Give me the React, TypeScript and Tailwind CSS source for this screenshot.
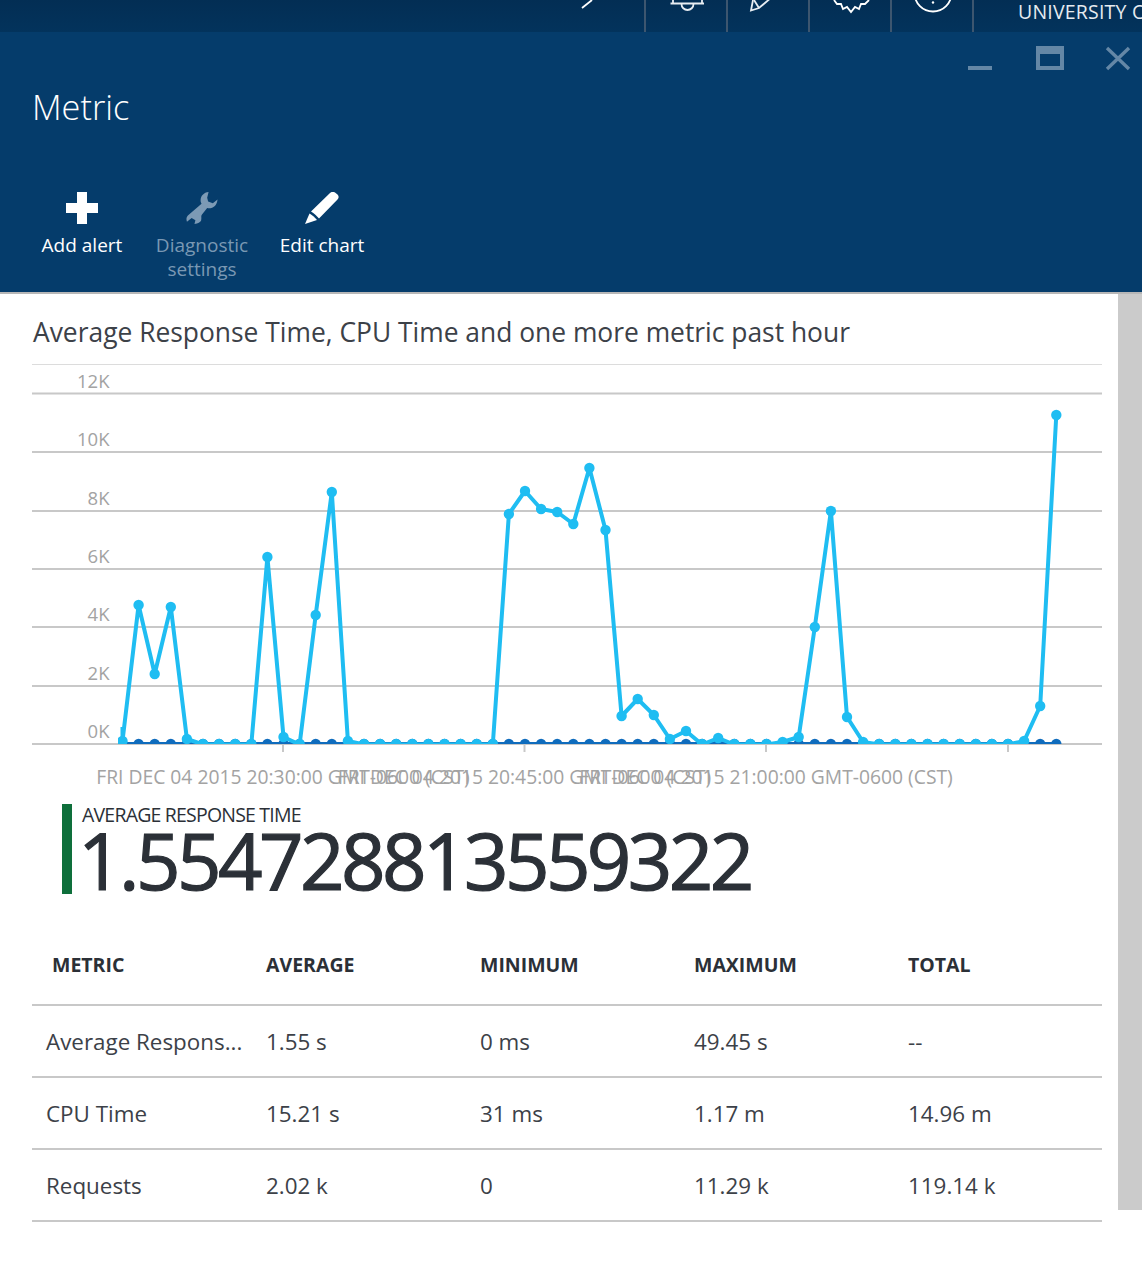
const high: Record<number, number> = {
  0: 741, 1: 605, 2: 674, 3: 607, 4: 739, 9: 557, 10: 737, 12: 615, 13: 492, 14: 741,
  24: 514, 25: 491, 26: 509, 27: 512, 28: 524, 29: 468, 30: 530, 31: 716, 32: 699, 33: 715,
  34: 739, 35: 731, 37: 738, 41: 742, 42: 737, 43: 627, 44: 511, 45: 717, 46: 742, 56: 741, 57: 706, 58: 415,
};
const cyanDots = Array.from({ length: 59 }, (_, k) => ({ x: 122.5 + 16.1 * k, y: high[k] ?? 744.5 }));
const grid = [393.5, 452, 511, 569, 627, 686, 744];
const yLabels: [string, number][] = [["12K", 388], ["10K", 446], ["8K", 505], ["6K", 563], ["4K", 621], ["2K", 680], ["0K", 738]];
const xLabels: [string, number][] = [
  ["FRI DEC 04 2015 20:30:00 GMT-0600 (CST)", 283],
  ["FRI DEC 04 2015 20:45:00 GMT-0600 (CST)", 524.5],
  ["FRI DEC 04 2015 21:00:00 GMT-0600 (CST)", 766],
];
const rows = [
  ["Average Respons...", "1.55 s", "0 ms", "49.45 s", "--"],
  ["CPU Time", "15.21 s", "31 ms", "1.17 m", "14.96 m"],
  ["Requests", "2.02 k", "0", "11.29 k", "119.14 k"],
];
const hiddenDark = [1, 2, 3, 9, 12, 13, 43, 44, 45, 57, 58];

function TopCell({ children }: { children: React.ReactNode }) {
  return <div className="w-[82px] h-8 border-l-2 border-[#3d566f] overflow-hidden">{children}</div>;
}

function Chart() {
  return (
    <svg viewBox="0 360 1118 430" className="block w-[1118px] h-[430px]">
      <defs>
        <clipPath id="plot">
          <rect x="118" y="380" width="960" height="364" />
        </clipPath>
      </defs>
      <line x1="32" x2="1102" y1="364.5" y2="364.5" stroke="#dcdcdc" strokeWidth="1" />
      {grid.map((y) => (
        <line key={y} x1="32" x2="1102" y1={y} y2={y} stroke="#c8c8c8" strokeWidth="2" />
      ))}
      {[283, 524.5, 766, 1008].map((x) => (
        <line key={x} x1={x} x2={x} y1="744" y2="752" stroke="#c8c8c8" strokeWidth="2" />
      ))}
      {yLabels.map(([t, y]) => (
        <text key={t} x="109.5" y={y} textAnchor="end" fontSize="18.5" fill="#a3a3a3">{t}</text>
      ))}
      {xLabels.map(([t, x]) => (
        <text key={x} x={x} y="784" textAnchor="middle" fontSize="19.3" fill="#a3a3a3">{t}</text>
      ))}
      <g clipPath="url(#plot)">
        <line x1="122" x2="1060" y1="743" y2="743" stroke="#0f6cbd" strokeWidth="2" />
        {cyanDots.map((d, k) => (
          <circle key={k} cx={d.x} cy="744" r="5.2" fill="#0f6cbd" />
        ))}
        <polyline
          points={["122.5,727", ...cyanDots.map((d) => `${d.x},${d.y}`)].join(" ")}
          fill="none"
          stroke="#1fbdf2"
          strokeWidth="4"
          strokeLinejoin="round"
        />
        {cyanDots.map((d, k) =>
          d.y > 742 && (hiddenDark.includes(k) || (k >= 24 && k <= 34)) ? null : (
            <circle key={k} cx={d.x} cy={d.y > 744 ? 744 : d.y} r="5.2" fill="#1fbdf2" />
          )
        )}
      </g>
    </svg>
  );
}

export default function App() {
  return (
    <div className="w-[1142px] h-[1280px] bg-white overflow-hidden font-['Open_Sans','Noto_Sans',sans-serif]">
      <div className="h-8 bg-gradient-to-b from-[#032e54] to-[#03335c] flex justify-end">
        <div className="flex-1 overflow-hidden">
          <svg viewBox="0 0 645 32" className="block w-[645px] h-8">
            <path d="M582 8 L592 0" stroke="#fff" strokeWidth="1.8" fill="none" />
          </svg>
        </div>
        <TopCell>
          <svg viewBox="645 0 82 32" className="block w-[82px] h-8" fill="none" stroke="#e8edf2" strokeWidth="1.8">
            <path d="M669.5 3.5H703" />
            <path d="M680.5 4a6 6 0 0 0 12 0" />
            <path d="M672 0v3M701 0v3" />
          </svg>
        </TopCell>
        <TopCell>
          <svg viewBox="727 0 82 32" className="block w-[82px] h-8" fill="none" stroke="#e8edf2" strokeWidth="1.8">
            <path d="M752 0L750 10.5L758 8L771 -3" />
            <path d="M753 0L758 8" />
          </svg>
        </TopCell>
        <TopCell>
          <svg viewBox="809 0 82 32" className="block w-[82px] h-8" fill="none" stroke="#fff" strokeWidth="1.8">
            <path d="M833 0L836 4L840 4L842 9L846 7L850 12L854 7L858 9L860 4L864 4L868 0" />
          </svg>
        </TopCell>
        <TopCell>
          <svg viewBox="891 0 82 32" className="block w-[82px] h-8" fill="none" stroke="#fff" strokeWidth="1.8">
            <circle cx="932" cy="-7" r="18.5" />
            <circle cx="932" cy="2.5" r="1.2" fill="#fff" stroke="none" />
          </svg>
        </TopCell>
        <div className="w-[170px] h-8 border-l-2 border-[#3d566f] overflow-hidden pl-[44px] text-[19.5px] tracking-[0.2px] leading-6 text-[#e6ebf0] whitespace-nowrap">
          UNIVERSITY OF
        </div>
      </div>

      <div className="relative h-[260px] bg-[#053c6b] pl-[32px]">
        <svg viewBox="960 32 182 45" className="absolute right-0 top-0 w-[182px] h-[45px]" fill="#6487a6">
          <rect x="968" y="66" width="24" height="4" />
          <path fillRule="evenodd" d="M1036 46h28v24h-28zM1040 54v12h20v-12z" />
          <path d="M1107 48L1129 69M1129 48L1107 69" stroke="#6487a6" strokeWidth="3.4" fill="none" />
        </svg>
        <div className="pt-[52px] text-[34.3px] leading-[46px] font-light text-white">Metric</div>
        <div className="mt-[62px] flex text-[19px] leading-6 text-center">
          <div className="w-[100px] flex flex-col items-center text-white">
            <svg viewBox="0 0 32 32" className="w-8 h-8 mb-[9px]" fill="#fff">
              <path d="M11 0h10v11h11v10H21v11H11V21H0V11h11z" />
            </svg>
            Add alert
          </div>
          <div className="w-[140px] flex flex-col items-center text-[#7a98b3]">
            <svg viewBox="0 0 34 34" className="w-[34px] h-8 mb-[9px]" fill="#7c9ab5">
              <path d="M24 0C19 0.5 15.5 4 15.5 9C15.5 10.5 16 11.5 16.5 12.5L2 25C0.5 26.5 0 28.5 1 31.5L6 27.5L10 30L9 34C13 33.5 15 32 16 30.5C17 27 15.5 26 17 24L22.5 17C24 17.5 25.5 17.5 27 17C31 16 33 12.5 33.5 8L28.5 12L23.5 10L22.5 6Z" />
            </svg>
            <div className="w-[100px]">Diagnostic settings</div>
          </div>
          <div className="w-[100px] flex flex-col items-center text-white">
            <svg viewBox="0 0 34 32" className="w-[34px] h-8 mb-[9px]" fill="#fff">
              <path d="M6 19.5L25 1C26.5 -0.5 28.5 -0.5 30 0.5L32.5 2.5C34 4 34 6 32.5 7.5L14 26.5C12 24 9 21.5 6 19.5Z" />
              <path d="M4.5 21.5C7.5 23.5 10 25.5 12 28L0 32Z" />
            </svg>
            Edit chart
          </div>
        </div>
      </div>
      <div className="h-0.5 bg-[#b7b7b7]" />

      <div className="flex">
        <div className="w-[1118px]">
          <div className="h-[66px] pl-[33px] pt-[21px] text-[26.4px] leading-[34px] text-[#3c4148]">
            Average Response Time, CPU Time and one more metric past hour
          </div>
          <Chart />
          <div className="ml-[62px] mt-[14px] h-[90px] border-l-[10px] border-[#0e6f3b] pl-[10px]">
            <div className="text-[19.5px] leading-[22px] text-[#2b3037] tracking-[-0.8px]">AVERAGE RESPONSE TIME</div>
            <div className="text-[78px] leading-[68px] [-webkit-text-stroke:1.2px_#2b3037] text-[#2b3037] tracking-[-3.6px] -ml-[4px] whitespace-nowrap">1.554728813559322</div>
          </div>
          <div className="mx-[32px] mt-[32px] w-[1070px]">
            <div className="grid grid-cols-[234px_214px_214px_214px_194px] h-[80px] items-center border-b-2 border-[#c8c8c8] text-[19.5px] font-bold text-[#2b3037]">
              <div className="pl-[20px]">METRIC</div>
              <div>AVERAGE</div>
              <div>MINIMUM</div>
              <div>MAXIMUM</div>
              <div>TOTAL</div>
            </div>
            {rows.map((r) => (
              <div key={r[0]} className="grid grid-cols-[234px_214px_214px_214px_194px] h-[72px] pt-[2px] items-center border-b-2 border-[#c8c8c8] text-[22.4px] text-[#3c4148]">
                <div className="pl-[14px] whitespace-nowrap">{r[0]}</div>
                <div>{r[1]}</div>
                <div>{r[2]}</div>
                <div>{r[3]}</div>
                <div>{r[4]}</div>
              </div>
            ))}
          </div>
        </div>
        <div className="w-6 h-[916px] bg-[#cbcbcb]" />
      </div>
    </div>
  );
}
